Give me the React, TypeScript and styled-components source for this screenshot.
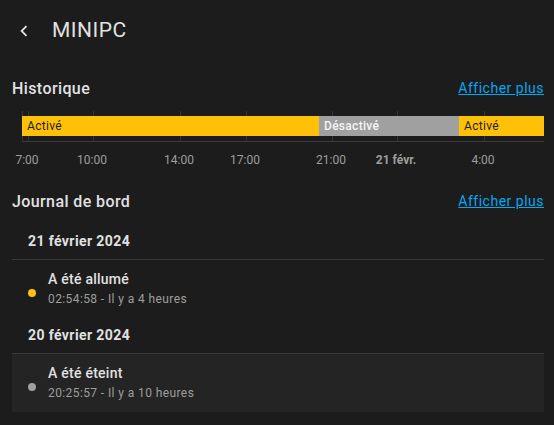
import React from 'react'
import styled, { createGlobalStyle } from 'styled-components'

const GlobalStyle = createGlobalStyle`
    html, body {
        margin: 0;
        padding: 0;
        background: #1c1c1c;
    }
    body {
        font-family: Roboto, "Noto Sans", sans-serif;
        color: #e1e1e1;
    }
`;

const Page = styled.div`
    width: 554px;
    height: 425px;
    overflow: hidden;
    background: #1c1c1c;
`;

const Toolbar = styled.header`
    display: flex;
    align-items: center;
    height: 60px;
    padding-left: 13px;
    gap: 17px;
`;

const BackButton = styled.div`
    display: flex;
    width: 22px;
    height: 22px;
    margin-top: 2px;
    color: #e1e1e1;
`;

const Title = styled.h1`
    margin: 0;
    font-size: 21px;
    font-weight: 400;
    letter-spacing: 0.5px;
    color: #e1e1e1;
`;

const Content = styled.main`
    padding: 16px 10px 0 12px;
`;

const SectionHead = styled.div<{ $gap?: number }>`
    display: flex;
    align-items: center;
    justify-content: space-between;
    height: 24px;
    margin-top: ${p => p.$gap ?? 0}px;
`;

const SectionTitle = styled.h2`
    margin: 0;
    font-size: 16px;
    font-weight: 500;
    letter-spacing: 0.4px;
    color: #e1e1e1;
`;

const MoreLink = styled.a`
    font-size: 14px;
    letter-spacing: 0.5px;
    color: #03a9f4;
    text-decoration: underline;
    cursor: pointer;
`;

const Chart = styled.div`
    margin: 11px 0 0 10px;
`;

const Plot = styled.div`
    position: relative;
    height: 31px;
    border-left: 1px solid #3a3a3a;
    border-bottom: 1px solid #3a3a3a;
    box-sizing: border-box;
`;

const GridLine = styled.div`
    position: absolute;
    top: 0;
    bottom: 0;
    width: 1px;
    background: #333333;
`;

const Bar = styled.div`
    position: absolute;
    top: 5px;
    left: -1px;
    right: 0;
    height: 20px;
    display: flex;
`;

const Segment = styled.div<{ $on: boolean }>`
    box-sizing: border-box;
    height: 100%;
    padding-left: 5px;
    display: flex;
    align-items: center;
    font-size: 12px;
    letter-spacing: 0.3px;
    font-weight: ${p => (p.$on ? 400 : 500)};
    color: ${p => (p.$on ? '#1c1c1c' : '#f5f5f5')};
    background: ${p => (p.$on ? '#ffc107' : '#a0a0a0')};
    white-space: nowrap;
    overflow: hidden;
`;

const Axis = styled.div`
    position: relative;
    height: 34px;
`;

const Tick = styled.span<{ $bold?: boolean }>`
    position: absolute;
    top: 11px;
    transform: translateX(-50%);
    font-size: 12px;
    line-height: 14px;
    font-weight: ${p => (p.$bold ? 700 : 400)};
    color: #9e9e9e;
    white-space: nowrap;
`;

const Logbook = styled.div`
    margin-top: 20px;
`;

const DateHead = styled.div<{ $first?: boolean }>`
    padding: ${p => (p.$first ? '0 0 10px' : '9px 0 10px')} 16px;
    font-size: 14px;
    line-height: 16px;
    font-weight: 700;
    letter-spacing: 0.4px;
    color: #e1e1e1;
`;

const Entry = styled.div<{ $shaded?: boolean }>`
    display: flex;
    align-items: center;
    border-top: 1px solid #383838;
    background: ${p => (p.$shaded ? '#242424' : 'transparent')};
    padding: 9px 0 11px 16px;
`;

const Dot = styled.span<{ $color: string }>`
    width: 8px;
    height: 8px;
    border-radius: 50%;
    background: ${p => p.$color};
    margin: 9px 12px 0 0;
    flex: none;
`;

const EntryText = styled.div`
    display: flex;
    flex-direction: column;
    gap: 2px;
`;

const EntryTitle = styled.div`
    font-size: 14px;
    line-height: 20px;
    font-weight: 500;
    letter-spacing: 0.25px;
    color: #e1e1e1;
`;

const EntryTime = styled.div`
    font-size: 12px;
    line-height: 16px;
    letter-spacing: 0.4px;
    color: #9e9e9e;
`;

const segments = [
    { label: 'Activé', on: true, width: 297 },
    { label: 'Désactivé', on: false, width: 140 },
    { label: 'Activé', on: true, width: 85 },
];

const ticks = [
    { x: 5, label: '7:00' },
    { x: 70, label: '10:00' },
    { x: 157, label: '14:00' },
    { x: 223, label: '17:00' },
    { x: 309, label: '21:00' },
    { x: 374, label: '21 févr.', bold: true },
    { x: 461, label: '4:00' },
];

const days = [
    {
        date: '21 février 2024',
        entries: [{ title: 'A été allumé', time: '02:54:58 - Il y a 4 heures', on: true }],
    },
    {
        date: '20 février 2024',
        entries: [{ title: 'A été éteint', time: '20:25:57 - Il y a 10 heures', on: false }],
    },
];

export default function App() {
    return <Page>
        <GlobalStyle />
        <Toolbar>
            <BackButton>
                <svg width="22" height="22" viewBox="0 0 24 24" fill="currentColor">
                    <path d="M15.41,16.58L10.83,12L15.41,7.41L14,6L8,12L14,18L15.41,16.58Z" />
                </svg>
            </BackButton>
            <Title>MINIPC</Title>
        </Toolbar>

        <Content>
            <SectionHead>
                <SectionTitle>Historique</SectionTitle>
                <MoreLink>Afficher plus</MoreLink>
            </SectionHead>

            <Chart>
                <Plot>
                    {ticks.map(t => <GridLine key={t.label} style={{ left: t.x }} />)}
                    <Bar>
                        {segments.map((s, i) => (
                            <Segment key={i} $on={s.on} style={{ width: s.width }}>{s.label}</Segment>
                        ))}
                    </Bar>
                </Plot>
                <Axis>
                    {ticks.map(t => (
                        <Tick key={t.label} $bold={t.bold} style={{ left: t.x }}>{t.label}</Tick>
                    ))}
                </Axis>
            </Chart>

            <SectionHead $gap={13}>
                <SectionTitle>Journal de bord</SectionTitle>
                <MoreLink>Afficher plus</MoreLink>
            </SectionHead>

            <Logbook>
                {days.map((d, i) => (
                    <React.Fragment key={d.date}>
                        <DateHead $first={i === 0}>{d.date}</DateHead>
                        {d.entries.map(e => (
                            <Entry key={e.title} $shaded={!e.on}>
                                <Dot $color={e.on ? '#ffc107' : '#a0a0a0'} />
                                <EntryText>
                                    <EntryTitle>{e.title}</EntryTitle>
                                    <EntryTime>{e.time}</EntryTime>
                                </EntryText>
                            </Entry>
                        ))}
                    </React.Fragment>
                ))}
            </Logbook>
        </Content>
    </Page>
}
